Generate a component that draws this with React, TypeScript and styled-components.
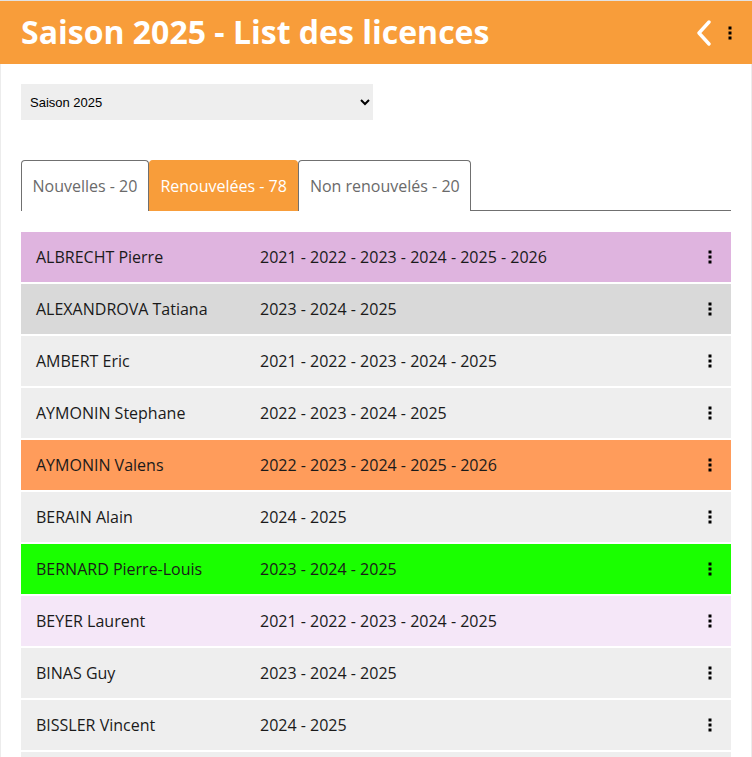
import React from "react";
import styled, { createGlobalStyle } from "styled-components";

const GlobalStyle = createGlobalStyle`
  html, body { margin: 0; padding: 0; background: #fff; }
  body { font-family: "Open Sans", "Noto Sans", sans-serif; }
`;

const Page = styled.div`
  width: 752px;
  height: 757px;
  overflow: hidden;
  box-sizing: border-box;
`;

const Header = styled.header`
  height: 64px;
  box-sizing: border-box;
  border-top: 1px solid #e2e2e2;
  background: #f89d3a;
  display: flex;
  align-items: center;
  padding: 0 20px 0 21px;
`;

const Title = styled.h1`
  margin: 0;
  flex: 1;
  color: #fff;
  font-family: "Open Sans", sans-serif;
  font-weight: 700;
  font-size: 32px;
  line-height: 1;
  padding-bottom: 2px;
`;

const HeaderActions = styled.div`
  display: flex;
  align-items: center;
  gap: 15px;
`;

const IconButton = styled.button`
  border: none;
  background: transparent;
  padding: 0;
  display: flex;
  align-items: center;
  cursor: pointer;
`;

const Content = styled.main`
  border-left: 1px solid #ececec;
  border-right: 1px solid #ececec;
  padding: 20px 20px 0 20px;
  min-height: 693px;
  box-sizing: border-box;
`;

const Select = styled.select`
  width: 352px;
  height: 36px;
  border: none;
  border-radius: 0;
  background: #eee;
  font-family: Arial, "Liberation Sans", sans-serif;
  font-size: 13px;
  color: #000;
  padding: 0 5px;
  outline: none;
`;

const Tabs = styled.div`
  display: flex;
  margin-top: 40px;
  height: 51px;
`;

const Tab = styled.button<{ $active?: boolean }>`
  border: 1px solid ${(p) => (p.$active ? "#f89d3a" : "#707070")};
  border-bottom: none;
  border-radius: 4px 4px 0 0;
  background: ${(p) => (p.$active ? "#f89d3a" : "#fff")};
  color: ${(p) => (p.$active ? "#fff" : "#6a6a6a")};
  font-family: "Open Sans", sans-serif;
  font-size: 16px;
  padding: 0 10.5px;
  height: 51px;
  cursor: pointer;
  white-space: nowrap;
`;

const TabFill = styled.div`
  flex: 1;
  border-bottom: 1px solid #707070;
`;

const List = styled.ul`
  list-style: none;
  margin: 21px 0 0;
  padding: 0;
  display: flex;
  flex-direction: column;
  gap: 2px;
`;

const Row = styled.li<{ $bg: string }>`
  height: 50px;
  flex-shrink: 0;
  background: ${(p) => p.$bg};
  display: grid;
  grid-template-columns: 224px 1fr auto;
  align-items: center;
  padding: 0 19px 0 15px;
  font-family: "Open Sans", sans-serif;
  font-size: 16px;
  color: #1a1a1a;
`;

const Cell = styled.span`
  white-space: nowrap;
`;

const Kebab = ({ color = "#000" }: { color?: string }) => (
  <svg width="4" height="14" viewBox="0 0 4 14">
    <rect x="0.5" y="0.5" width="3" height="3" fill={color} />
    <rect x="0.5" y="5.5" width="3" height="3" fill={color} />
    <rect x="0.5" y="10.5" width="3" height="3" fill={color} />
  </svg>
);

const rows: { name: string; years: string; bg: string }[] = [
  { name: "ALBRECHT Pierre", years: "2021 - 2022 - 2023 - 2024 - 2025 - 2026", bg: "#dfb4df" },
  { name: "ALEXANDROVA Tatiana", years: "2023 - 2024 - 2025", bg: "#d9d9d9" },
  { name: "AMBERT Eric", years: "2021 - 2022 - 2023 - 2024 - 2025", bg: "#eeeeee" },
  { name: "AYMONIN Stephane", years: "2022 - 2023 - 2024 - 2025", bg: "#eeeeee" },
  { name: "AYMONIN Valens", years: "2022 - 2023 - 2024 - 2025 - 2026", bg: "#ff9c5b" },
  { name: "BERAIN Alain", years: "2024 - 2025", bg: "#eeeeee" },
  { name: "BERNARD Pierre-Louis", years: "2023 - 2024 - 2025", bg: "#1aff00" },
  { name: "BEYER Laurent", years: "2021 - 2022 - 2023 - 2024 - 2025", bg: "#f5e7f8" },
  { name: "BINAS Guy", years: "2023 - 2024 - 2025", bg: "#eeeeee" },
  { name: "BISSLER Vincent", years: "2024 - 2025", bg: "#eeeeee" },
];

export default function App() {
  return (
    <Page>
      <GlobalStyle />
      <Header>
        <Title>Saison 2025 - List des licences</Title>
        <HeaderActions>
          <IconButton aria-label="Retour">
            <svg width="18" height="26" viewBox="0 0 18 26">
              <path d="M14 2 L4 13 L14 24" fill="none" stroke="#fff" strokeWidth="3.4" strokeLinecap="round" strokeLinejoin="round" />
            </svg>
          </IconButton>
          <IconButton aria-label="Menu">
            <Kebab />
          </IconButton>
        </HeaderActions>
      </Header>
      <Content>
        <Select defaultValue="2025">
          <option value="2025">Saison 2025</option>
          <option value="2024">Saison 2024</option>
        </Select>
        <Tabs>
          <Tab>Nouvelles - 20</Tab>
          <Tab $active>Renouvelées - 78</Tab>
          <Tab>Non renouvelés - 20</Tab>
          <TabFill />
        </Tabs>
        <List>
          {rows.map((r) => (
            <Row key={r.name} $bg={r.bg}>
              <Cell>{r.name}</Cell>
              <Cell>{r.years}</Cell>
              <Kebab />
            </Row>
          ))}
          <Row $bg="#eeeeee" aria-hidden="true" />
        </List>
      </Content>
    </Page>
  );
}
